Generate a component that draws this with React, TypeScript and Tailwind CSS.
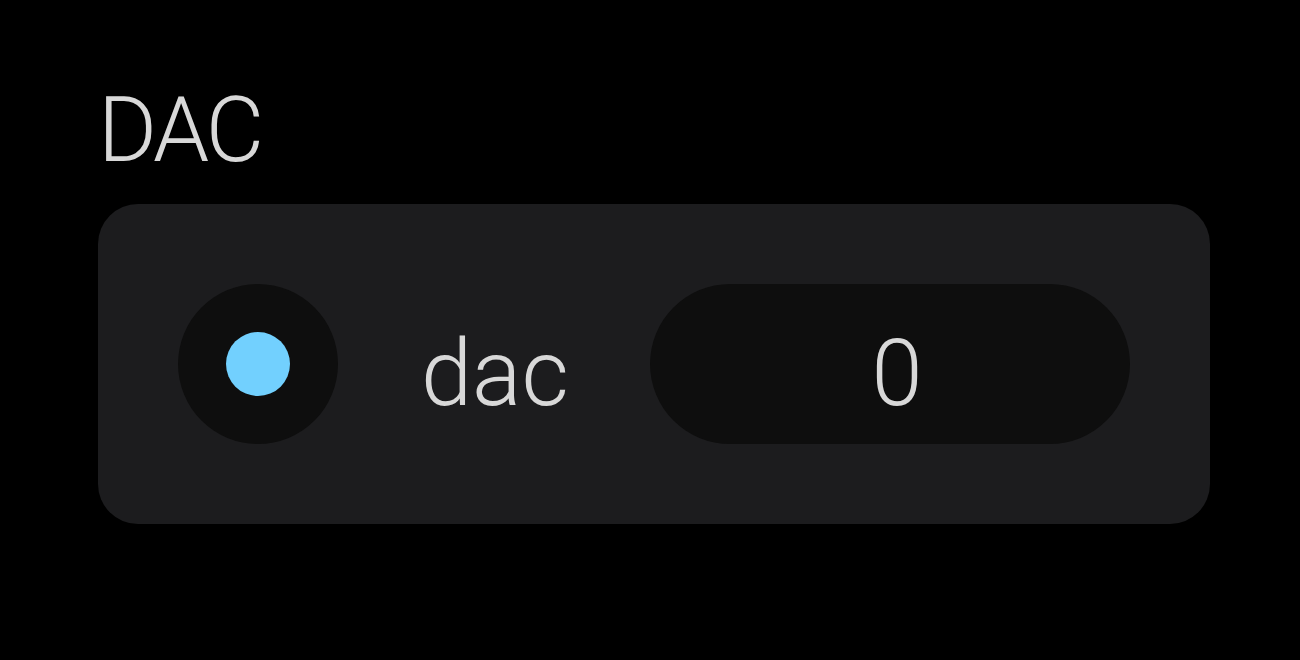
export default function App() {
  return (
    <div
      className="min-h-[660px] w-full bg-black pl-[98px] pt-[86px] text-[#d8d8d8]"
      style={{ fontFamily: "Roboto, 'Liberation Sans', sans-serif" }}
    >
      <h1 className="text-[90px] leading-none font-light tracking-[-3px]">DAC</h1>
      <div className="mt-[28px] flex h-[320px] w-[1112px] items-center rounded-[40px] bg-[#1c1c1e] px-[80px]">
        <div className="flex h-[160px] w-[160px] shrink-0 items-center justify-center rounded-full bg-[#0e0e0e]">
          <div className="h-[64px] w-[64px] rounded-full bg-[#72d0fe]" />
        </div>
        <span className="ml-[83px] pt-[20px] text-[92px] leading-none font-light">dac</span>
        <div className="ml-auto flex h-[160px] w-[480px] items-center justify-center rounded-full bg-[#0e0e0e] pl-[14px] pt-[20px] text-[92px] leading-none font-light">
          0
        </div>
      </div>
    </div>
  );
}
